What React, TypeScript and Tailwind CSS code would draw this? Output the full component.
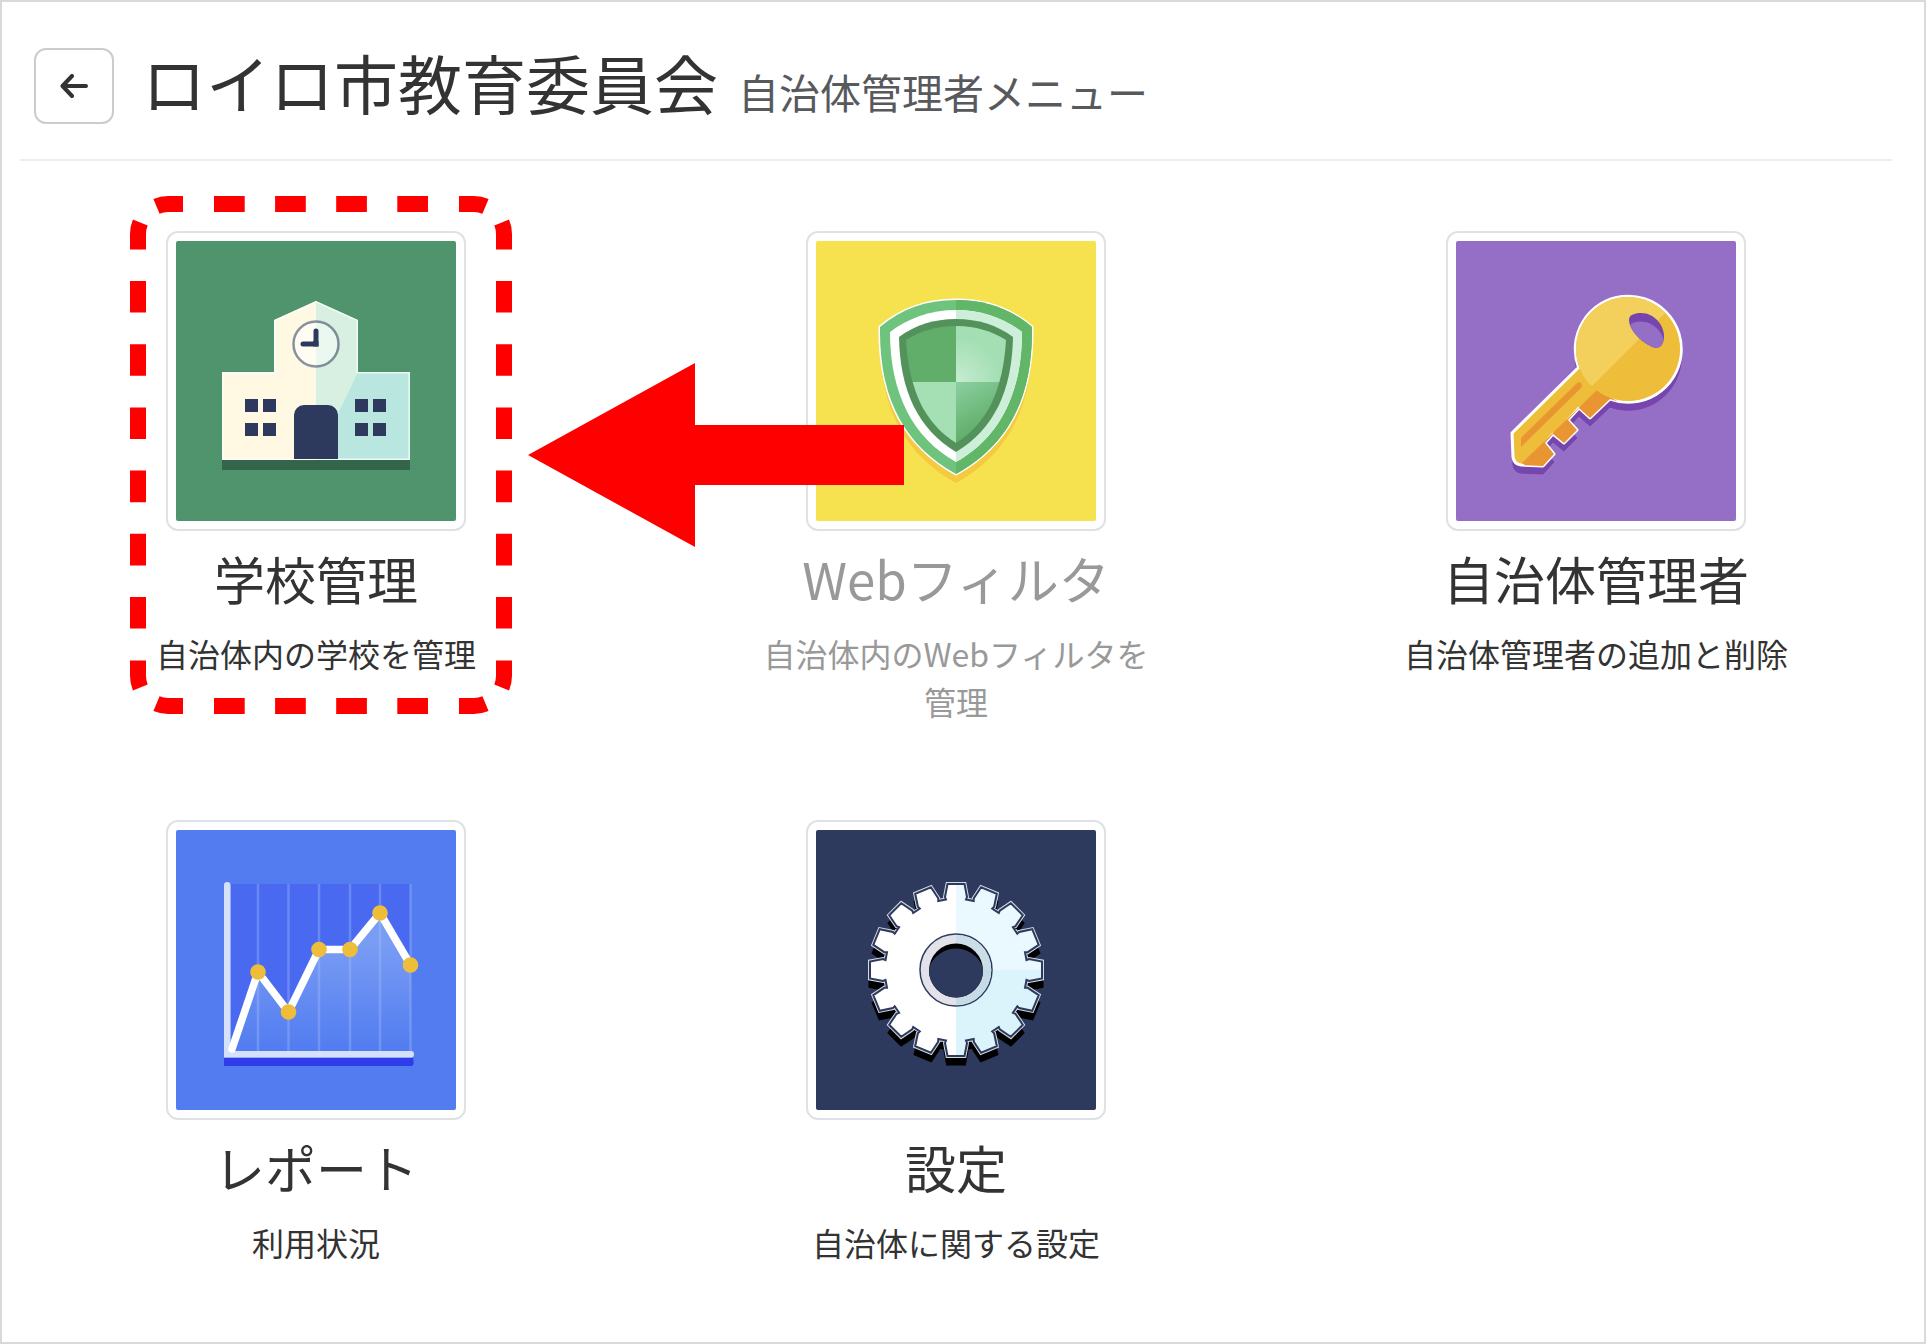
import type { ReactNode } from "react"
import clsx from "clsx"

interface MenuItem {
  href: string
  title: string
  description: string
  icon: ReactNode
  disabled?: boolean
  highlighted?: boolean
}

const SCHOOL_OUTLINE = "M46 219V131H98V79L140 60L182 79V131H234V219Z"

function SchoolIcon() {
  return (
    <svg viewBox="0 0 280 280" className="size-full" aria-hidden="true">
      <defs>
        <clipPath id="school-clip">
          <path d={SCHOOL_OUTLINE} />
        </clipPath>
      </defs>
      <rect width="280" height="280" fill="#4f946c" />
      <rect x="46" y="219" width="188" height="10" fill="#346449" />
      <g clipPath="url(#school-clip)">
        <rect x="46" y="60" width="94" height="160" fill="#fff9e3" />
        <rect x="140" y="60" width="94" height="160" fill="#d7f0e1" />
        <path d="M183 129L162 173L140 219H234V129Z" fill="#b9e7e0" />
        <path d={SCHOOL_OUTLINE} fill="none" stroke="#fff" strokeOpacity=".75" strokeWidth="3" />
      </g>
      <circle cx="140" cy="103" r="22.5" fill="#fff" fillOpacity=".5" stroke="#2d3a5d" strokeOpacity=".55" strokeWidth="2.5" />
      <path d="M140 90V103H127" fill="none" stroke="#2d3a5d" strokeWidth="5" strokeLinecap="round" />
      <path d="M137 100H142.5V105.5H137Z" fill="#2d3a5d" />
      <path d="M118 218V174A10 10 0 0 1 128 164H152A10 10 0 0 1 162 174V218Z" fill="#2d3a5d" />
      <path
        d="M69 158h13v13h-13zM87 158h13v13h-13zM69 182h13v13h-13zM87 182h13v13h-13zM179 158h13v13h-13zM197 158h13v13h-13zM179 182h13v13h-13zM197 182h13v13h-13z"
        fill="#2d3a5d"
      />
    </svg>
  )
}

const SHIELD_OUTER = "M140 59C170 59 195 68 216 86C217 160 190 205 140 233C90 205 63 160 64 86C85 68 110 59 140 59Z"
const SHIELD_BAND = "M140 69C165 69 188 77 206 91C206 153 183 197 140 221C97 197 74 153 74 91C92 77 115 69 140 69Z"

function ShieldIcon() {
  return (
    <svg viewBox="0 0 280 280" className="size-full" aria-hidden="true">
      <defs>
        <clipPath id="shield-right">
          <rect x="140" width="140" height="280" />
        </clipPath>
        <clipPath id="shield-core">
          <path d="M140 85C160 85 175 90 190 99C187 148 172 182 140 202C108 182 93 148 90 99C105 90 120 85 140 85Z" />
        </clipPath>
        <radialGradient id="shield-top" gradientUnits="userSpaceOnUse" cx="142" cy="140" r="42">
          <stop offset="0" stopColor="#c5ecd0" />
          <stop offset="1" stopColor="#a4dfb4" />
        </radialGradient>
        <linearGradient id="shield-bottom" gradientUnits="userSpaceOnUse" x1="140" y1="141" x2="168" y2="190">
          <stop offset="0" stopColor="#8bd0a1" />
          <stop offset="1" stopColor="#5fac68" />
        </linearGradient>
      </defs>
      <rect width="280" height="280" fill="#f6e14e" />
      <path d={SHIELD_OUTER} transform="translate(0 9)" fill="#f3ca40" />
      <path d={SHIELD_OUTER} fill="none" stroke="#fff" strokeWidth="3" strokeLinejoin="round" />
      <path d={SHIELD_OUTER} fill="#6fc47d" />
      <path d={SHIELD_OUTER} fill="#62b667" clipPath="url(#shield-right)" />
      <path d={SHIELD_BAND} fill="#fff" />
      <path d={SHIELD_BAND} fill="#cdeed8" clipPath="url(#shield-right)" />
      <path d="M140 78C162 78 181 84 197 96C196 150 178 188 140 211C102 188 84 150 83 96C99 84 118 78 140 78Z" fill="#53935b" />
      <g clipPath="url(#shield-core)">
        <rect x="80" y="80" width="60" height="61" fill="#61ae6a" />
        <rect x="140" y="80" width="60" height="61" fill="url(#shield-top)" />
        <rect x="80" y="141" width="60" height="64" fill="#a5e0b5" />
        <rect x="140" y="141" width="60" height="64" fill="url(#shield-bottom)" />
      </g>
    </svg>
  )
}

const KEY_OUTLINE =
  "M122.5 126.5L56 192L57 216Q58 223 65 224L87 225L98 213L89 202L97 193L108 202L121 189L112 179L123 167L134 177L154 158A53 53 0 1 0 122.5 126.5Z"
const KEY_HOLE = "M173 79C173 74 178 72 185 72C199 72 208 85 208 95C208 102 205 107 200 107C189 105 173 90 173 79Z"

function KeyIcon() {
  return (
    <svg viewBox="0 0 280 280" className="size-full" aria-hidden="true">
      <defs>
        <clipPath id="key-clip">
          <path d={KEY_OUTLINE} />
        </clipPath>
        <clipPath id="key-head">
          <circle cx="172" cy="108" r="52" />
        </clipPath>
        <clipPath id="key-hole">
          <path d={KEY_HOLE} />
        </clipPath>
      </defs>
      <rect width="280" height="280" fill="#956ec5" />
      <path d={KEY_OUTLINE} transform="translate(0 8)" fill="#7645ad" stroke="#7645ad" />
      <path d={KEY_OUTLINE} fill="#eebe3a" stroke="#fff" strokeWidth="3" strokeLinejoin="round" />
      <g clipPath="url(#key-clip)">
        <path d="M141 149L66 222L90 240L170 165Z" fill="#e99531" />
      </g>
      <circle cx="172" cy="108" r="52" fill="#eebe3a" />
      <path d="M136 145L209 72V40H100V126Z" fill="#f2d05b" clipPath="url(#key-head)" />
      <path d="M65 206V197L121 142Q125 140 126 144Q126 146 124 148Z" fill="#e99531" />
      <path d={KEY_HOLE} fill="#7645ad" />
      <g clipPath="url(#key-hole)">
        <path d={KEY_HOLE} transform="translate(0 9)" fill="#956ec5" stroke="#956ec5" />
      </g>
    </svg>
  )
}

const REPORT_POINTS = [
  [82, 142],
  [112.5, 182],
  [143, 119.5],
  [174, 119.5],
  [204, 83],
  [234.5, 135],
]
const REPORT_LINE = `M56 219L${REPORT_POINTS.map((point) => point.join(" ")).join("L")}`

function ReportIcon() {
  return (
    <svg viewBox="0 0 280 280" className="size-full" aria-hidden="true">
      <defs>
        <linearGradient id="report-area" gradientUnits="userSpaceOnUse" x1="0" y1="110" x2="0" y2="220">
          <stop offset="0" stopColor="#7a9df4" />
          <stop offset="1" stopColor="#527cf0" />
        </linearGradient>
      </defs>
      <rect width="280" height="280" fill="#527cf0" />
      <rect x="55" y="54" width="179" height="167" fill="#496af0" />
      <path d={`${REPORT_LINE}V221H56Z`} fill="url(#report-area)" />
      {REPORT_POINTS.map(([x]) => (
        <path key={x} d={`M${x} 54V221`} stroke="#a9bff8" strokeOpacity=".35" strokeWidth="2.5" />
      ))}
      <path d="M48 228H237Q239 236 235 236H48Z" fill="#2f3cea" />
      <path d="M48 227.5V55Q48 52 51 52Q54.5 52 54.5 55V221H235Q238 221 238 224Q238 227.5 235 227.5Z" fill="#d5e0fb" />
      <path d={REPORT_LINE} fill="none" stroke="#fff" strokeWidth="7.5" strokeLinejoin="round" strokeLinecap="round" />
      {REPORT_POINTS.map(([x, y]) => (
        <circle key={x} cx={x} cy={y} r="7.8" fill="#eebe3a" />
      ))}
    </svg>
  )
}

// Corner points of one tooth: [radius, offset from the tooth's axis]
const TOOTH = [
  [70.5, -10],
  [73, -11],
  [86, -8.5],
  [86, 8.5],
  [73, 11],
  [70.5, 10],
]
const TOOTH_COUNT = 16
const GEAR_OUTLINE = `M${Array.from({ length: TOOTH_COUNT }, (_, index) => {
  const angle = (index * 2 * Math.PI) / TOOTH_COUNT
  return TOOTH.map(([radius, offset]) => {
    const x = 140 + offset * Math.cos(angle) + radius * Math.sin(angle)
    const y = 140 + offset * Math.sin(angle) - radius * Math.cos(angle)
    return `${x.toFixed(1)} ${y.toFixed(1)}`
  }).join("L")
}).join("L")}Z`

function GearIcon() {
  return (
    <svg viewBox="0 0 280 280" className="size-full" aria-hidden="true">
      <defs>
        <clipPath id="gear-top">
          <rect x="140" width="140" height="140" />
        </clipPath>
        <clipPath id="gear-bottom">
          <rect x="140" y="140" width="140" height="140" />
        </clipPath>
        <clipPath id="gear-hole">
          <circle cx="140" cy="140.5" r="27" />
        </clipPath>
      </defs>
      <rect width="280" height="280" fill="#2d3a5d" />
      <path d={GEAR_OUTLINE} transform="translate(0 8)" fill="#000" stroke="#000" strokeWidth="3" />
      <path d={GEAR_OUTLINE} fill="none" stroke="#d5d9e2" strokeWidth="4" />
      <path d={GEAR_OUTLINE} fill="#fff" />
      <path d={GEAR_OUTLINE} fill="#e9f9ff" clipPath="url(#gear-top)" />
      <path d={GEAR_OUTLINE} fill="#dbf4fb" clipPath="url(#gear-bottom)" />
      <path d={GEAR_OUTLINE} fill="none" stroke="#2d3a5d" strokeWidth="2" />
      <circle cx="140" cy="140" r="36" fill="#e3e1ea" stroke="#2d3a5d" strokeWidth="1.5" />
      <circle cx="140" cy="140" r="35.3" fill="#cbdde7" clipPath="url(#gear-top)" />
      <circle cx="140" cy="140" r="35.3" fill="#c5dbe5" clipPath="url(#gear-bottom)" />
      <g clipPath="url(#gear-hole)">
        <rect x="100" y="100" width="80" height="80" fill="#000" />
        <circle cx="140" cy="147" r="28.5" fill="#2d3a5d" />
      </g>
    </svg>
  )
}

const CORNER_DASHES = "M26.5 10.3A30 30 0 0 1 38 8H53M10.3 26.5A30 30 0 0 0 8 38V53.5"

function HighlightFrame() {
  return (
    <svg
      viewBox="0 0 382 518"
      className="pointer-events-none absolute -top-[37px] -left-[38px] h-[518px] w-[382px] max-w-none"
      fill="none"
      stroke="#f00"
      strokeWidth="16"
      aria-hidden="true"
    >
      <path d={CORNER_DASHES} />
      <path d={CORNER_DASHES} transform="matrix(-1 0 0 1 382 0)" />
      <path d={CORNER_DASHES} transform="matrix(1 0 0 -1 0 518)" />
      <path d={CORNER_DASHES} transform="matrix(-1 0 0 -1 382 518)" />
      <path d="M84 8H298M84 510H298" strokeDasharray="30.7 30.4" />
      <path d="M8 85V433M374 85V433" strokeDasharray="31.6 31.6" />
    </svg>
  )
}

function PointerArrow() {
  return (
    <svg
      viewBox="0 0 376 184"
      className="pointer-events-none absolute top-[130px] left-[360px] z-10 h-[184px] w-[376px] max-w-none"
      aria-hidden="true"
    >
      <path d="M0 92L167 0V62H376V122H167V184Z" fill="#f00" />
    </svg>
  )
}

function MenuTile({ href, title, description, icon, disabled, highlighted }: MenuItem) {
  return (
    <li className="flex justify-center">
      <a
        href={href}
        aria-disabled={disabled}
        className={clsx("flex w-[400px] flex-col items-center text-center", disabled ? "text-[#999]" : "text-[#333]")}
      >
        <div className="relative size-[300px] rounded-xl border-2 border-[#dee2e6] bg-white p-2">
          <div className="size-full overflow-hidden rounded-xs">{icon}</div>
          {highlighted && (
            <>
              <HighlightFrame />
              <PointerArrow />
            </>
          )}
        </div>
        <h2 className="mt-[15px] text-[51px] leading-[64px]">{title}</h2>
        <p className="mt-[19px] text-[32px] leading-[48px]">{description}</p>
      </a>
    </li>
  )
}

const menuItems: MenuItem[] = [
  { href: "#schools", title: "学校管理", description: "自治体内の学校を管理", icon: <SchoolIcon />, highlighted: true },
  { href: "#web-filter", title: "Webフィルタ", description: "自治体内のWebフィルタを管理", icon: <ShieldIcon />, disabled: true },
  { href: "#admins", title: "自治体管理者", description: "自治体管理者の追加と削除", icon: <KeyIcon /> },
  { href: "#reports", title: "レポート", description: "利用状況", icon: <ReportIcon /> },
  { href: "#settings", title: "設定", description: "自治体に関する設定", icon: <GearIcon /> },
]

export default function App() {
  return (
    <div
      lang="ja"
      className="min-h-screen border-2 border-[#d9d9d9] bg-white pr-8 pl-[18px] font-['Noto_Sans_CJK_JP',sans-serif] text-[#333]"
    >
      <header className="flex items-center gap-7 border-b-2 border-[#eee] pt-[46px] pb-[35px] pl-3.5">
        <button
          type="button"
          aria-label="戻る"
          className="flex h-[76px] w-20 items-center justify-center rounded-xl border-2 border-[#ccc] bg-white"
        >
          <svg viewBox="0 0 28 24" className="h-6 w-7" fill="none" stroke="#333" strokeWidth="4" strokeLinecap="round" strokeLinejoin="round" aria-hidden="true">
            <path d="M26 12H3M12 2L2.5 12L12 22" />
          </svg>
        </button>
        <h1 className="flex items-baseline gap-5 pb-2.5 text-[64px] leading-[66px]">
          ロイロ市教育委員会
          <small className="text-[41px] leading-none text-[#58595d]">自治体管理者メニュー</small>
        </h1>
      </header>
      <main className="pt-[70px]">
        <ul className="grid grid-cols-3 gap-x-12 gap-y-[95px]">
          {menuItems.map((item) => (
            <MenuTile key={item.href} {...item} />
          ))}
        </ul>
      </main>
    </div>
  )
}
